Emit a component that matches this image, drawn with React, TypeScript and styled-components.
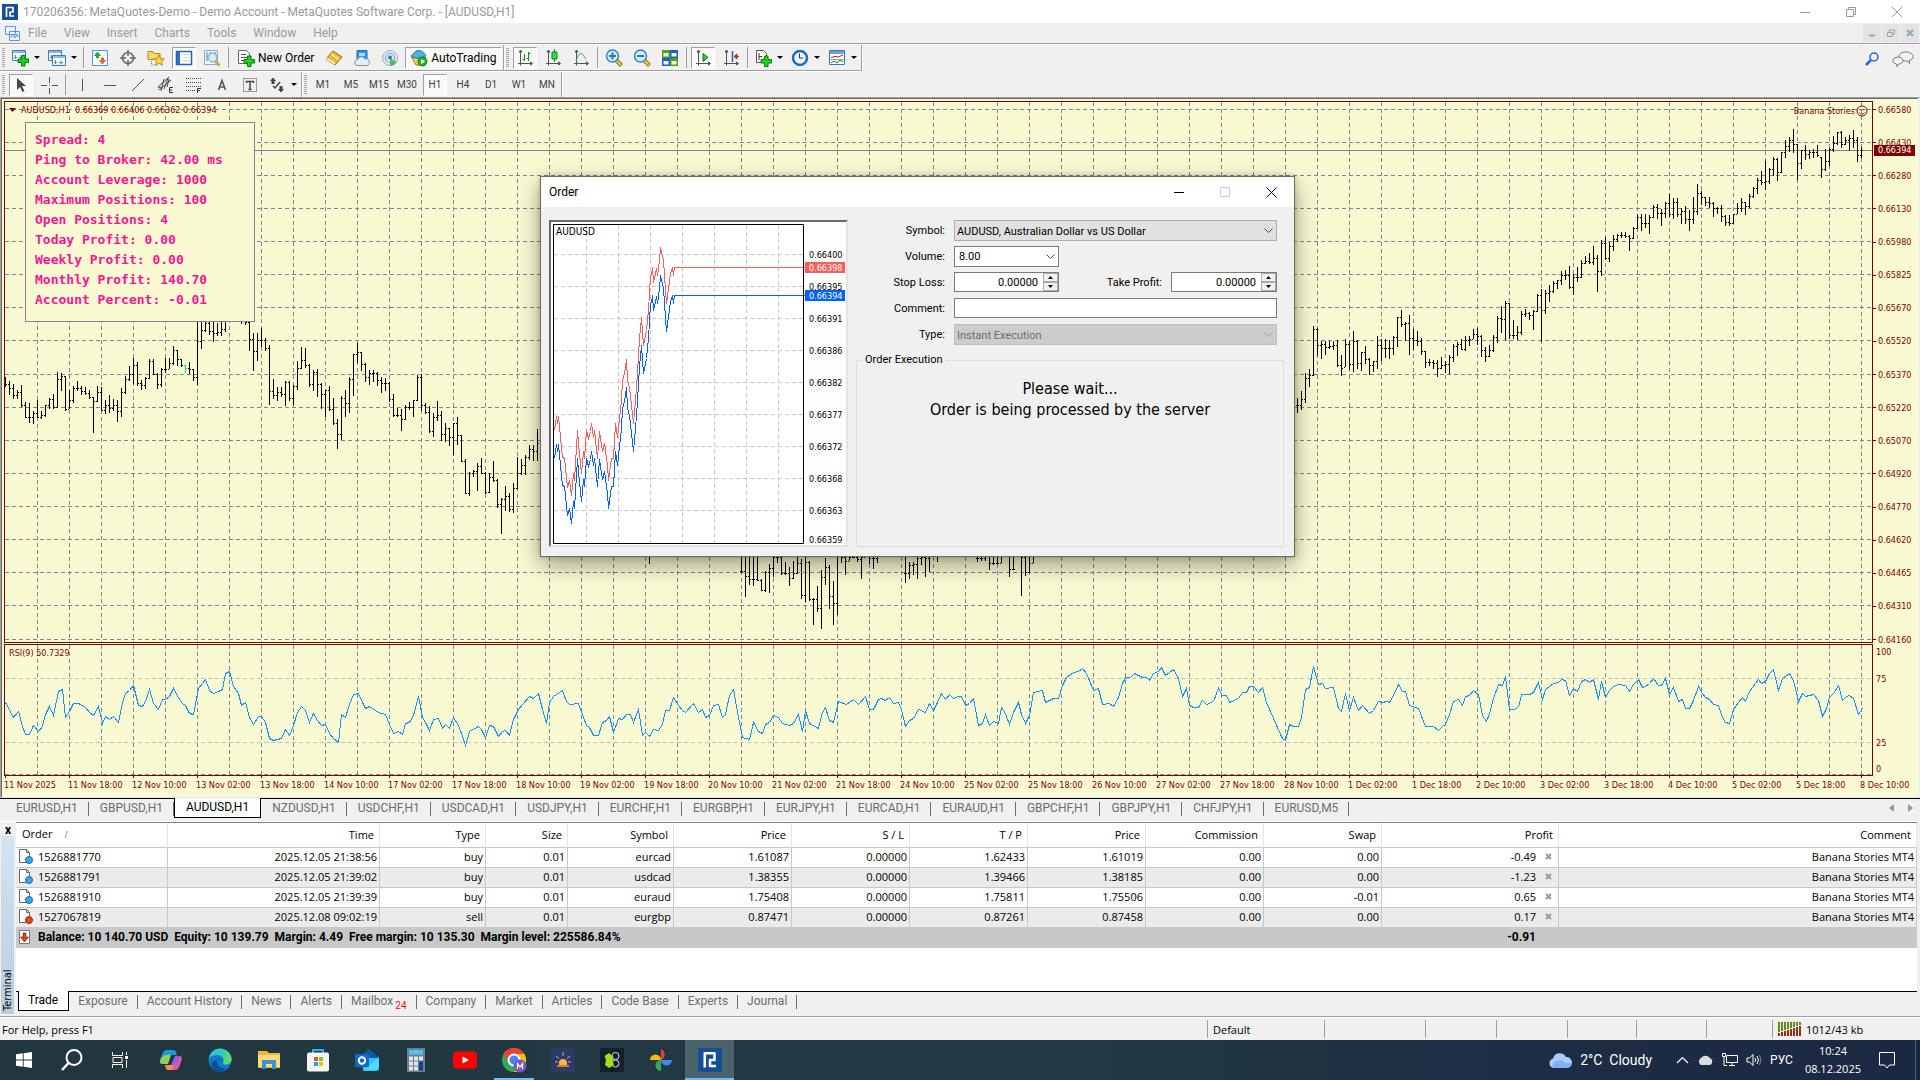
import React from "react";
import styled, { createGlobalStyle, css } from "styled-components";

const ui = `Roboto, "Open Sans", "Liberation Sans", sans-serif`;
const grid = `"Open Sans", "Noto Sans", sans-serif`;
const small = `"DejaVu Sans Condensed", "DejaVu Sans", sans-serif`;
const mono = `"DejaVu Sans Mono", "Liberation Mono", monospace`;
const face = "#f0f0f0";
const paper = "#fafad2";
const maroon = "#800000";
const slate = "#778899";

const GlobalStyle = createGlobalStyle`
  *, *::before, *::after { box-sizing: border-box; }
  body { margin: 0; background: ${face}; font: 12px ${ui}; color: #000; }
  button, input, select { font: inherit; color: inherit; margin: 0; }
  button { background: none; border: 0; padding: 0; }
  svg { display: block; flex: none; }
`;

/* ---------- shell ---------- */
const Page = styled.div`
  position: relative;
  display: flex;
  flex-direction: column;
  min-height: 100vh;
  overflow: hidden;
`;
const TitleBar = styled.header`
  display: flex;
  align-items: center;
  height: 23px;
  padding-left: 2px;
  background: #fff;
  color: #999;
`;
const AppTitle = styled.h1`
  flex: 1;
  margin: 0 0 0 5px;
  font: inherit;
  white-space: nowrap;
`;
const WindowButton = styled.button`
  display: grid;
  place-items: center;
  width: 46px;
  height: 20px;
`;
const MenuBar = styled.nav`
  display: flex;
  align-items: center;
  height: 21px;
  padding: 0 1px 0 5px;
  border-bottom: 1px solid #a0a0a0;
`;
const MenuItems = styled.div`
  display: flex;
  flex: 1;
  gap: 17px;
  margin-left: 8px;
  color: #999;
`;
const MdiButtons = styled.div`
  display: flex;
  gap: 1px;
`;
const MdiButton = styled.button`
  display: grid;
  place-items: center;
  width: 18px;
  height: 18px;
  background: #e3e3e3;
`;

/* ---------- toolbars ---------- */
const ToolRow = styled.div<{ $last?: boolean }>`
  display: flex;
  height: ${(p) => (p.$last ? 25 : 28)}px;
  border-top: ${(p) => (p.$last ? 0 : 1)}px solid #fff;
`;
const ToolGroup = styled.div<{ $under?: boolean }>`
  display: flex;
  align-items: center;
  padding-left: 7px;
  border-right: 1px solid #a0a0a0;
  box-shadow: 1px 0 #fff;
  position: relative;
  ${(p) => p.$under && css`border-bottom: 1px solid #a0a0a0; margin-bottom: 1px; box-shadow: 1px 1px #fff;`}
  &::before {
    content: "";
    position: absolute;
    left: 2px;
    top: 3px;
    bottom: 3px;
    width: 3px;
    background: repeating-linear-gradient(#a8a8a8 0 1px, ${face} 1px 2px);
  }
`;
const ToolButton = styled.button<{ $on?: boolean }>`
  display: flex;
  align-items: center;
  justify-content: center;
  width: 24px;
  height: 22px;
  margin: 0 2px;
  font-size: 10px;
  color: #404040;
  border: 1px solid transparent;
  ${(p) => p.$on && css`background: #f9f9f9; border-color: #a0a0a0 #fff #fff #a0a0a0;`}
`;
const MenuToolButton = styled.button`
  display: flex;
  align-items: center;
  justify-content: space-between;
  width: 33px;
  height: 22px;
  margin: 0 2px;
  padding: 0 2px;
  &::after {
    content: "";
    border: 3px solid transparent;
    border-top-color: #000;
    border-bottom: 0;
  }
`;
const TextToolButton = styled.button<{ $on?: boolean }>`
  display: flex;
  align-items: center;
  gap: 3px;
  height: 22px;
  margin: 0 1px;
  padding: 0 4px;
  border: 1px solid transparent;
  ${(p) => p.$on && css`background: #f9f9f9; border-color: #a0a0a0 #fff #fff #a0a0a0;`}
`;
const Divider = styled.i`
  width: 1px;
  height: 21px;
  margin: 0 2px;
  background: #a0a0a0;
`;
const ToolRight = styled.div`
  display: flex;
  align-items: center;
  gap: 13px;
  margin-left: auto;
  padding-right: 6px;
`;

/* ---------- chart ---------- */
const Workspace = styled.main`
  display: grid;
  grid-template-columns: minmax(0, 1fr) 45px;
  grid-template-rows: 542px 132px 20px;
  row-gap: 1px;
  padding: 2px 0 0 2px;
  margin-right: 2px;
  background: ${paper};
  border: 1px solid #696969;
  border-width: 1px 0 0 1px;
  color: ${maroon};
  font: 9px ${small};
`;
const WorkFrame = styled.div`
  border: 1px solid #a0a0a0;
  border-width: 1px 0 0 1px;
  border-bottom: 1px solid #e3e3e3;
`;
const Pane = styled.section`
  position: relative;
  border: 1px solid ${maroon};
  overflow: hidden;
`;
const PlotSvg = styled.svg`
  width: 100%;
  height: 100%;
`;
const Heading = styled.div`
  position: absolute;
  left: 4px;
  top: 0;
  display: flex;
  align-items: center;
  gap: 5px;
  height: 15px;
  white-space: pre;
`;
const ExpertName = styled.div`
  position: absolute;
  right: 4px;
  top: 2px;
  display: flex;
  align-items: center;
  gap: 1px;
  height: 14px;
`;
const StatsPanel = styled.div`
  position: absolute;
  left: 20px;
  top: 20px;
  width: 230px;
  height: 200px;
  padding: 7px 9px;
  background: ${paper};
  border: 1px solid ${slate};
  color: #ff1493;
  font: bold 13px/20px ${mono};
  white-space: nowrap;
`;
const PriceAxis = styled.div`
  position: relative;
  display: flex;
  flex-direction: column;
  justify-content: space-between;
  padding: 8px 0 3px;
`;
const AxisLabel = styled.span`
  display: flex;
  align-items: center;
  gap: 2px;
  height: 1px;
  line-height: 12px;
  &::before {
    content: "";
    width: 3px;
    height: 1px;
    background: ${maroon};
  }
`;
const PriceBadge = styled.span`
  position: absolute;
  left: 1px;
  top: 44px;
  width: 41px;
  padding-left: 4px;
  line-height: 11px;
  background: ${maroon};
  color: #fff;
`;
const RsiAxis = styled.div`
  display: grid;
  grid-template-rows: 27px 64px 26px 1fr;
  padding: 8px 0 0 3px;
  line-height: 1px;
`;
const TimeAxis = styled.div`
  grid-column: 1 / -1;
  display: flex;
  margin-top: -1px;
  overflow: hidden;
`;
const TimeLabel = styled.span`
  flex: none;
  width: 64px;
  line-height: 14px;
  white-space: nowrap;
  &::before {
    content: "";
    display: block;
    width: 1px;
    height: 2px;
    margin-left: 1px;
    background: ${maroon};
  }
`;

/* ---------- tabs ---------- */
const TabStrip = styled.div<{ $top: number }>`
  display: flex;
  align-items: flex-start;
  height: ${(p) => p.$top}px;
  border-top: 1px solid #000;
  padding-left: 5px;
`;
const Tab = styled.button<{ $active?: boolean; $tight?: boolean }>`
  position: relative;
  height: 19px;
  padding: ${(p) => (p.$tight ? "0 10px 2px 9px" : "0 11px 2px")};
  color: #6d6d6d;
  white-space: nowrap;
  &::after {
    content: "";
    position: absolute;
    right: 0;
    top: 3px;
    bottom: 2px;
    border-right: 1px solid #6d6d6d;
  }
  ${(p) =>
    p.$active &&
    css`
      margin-top: -1px;
      height: 20px;
      background: #fff;
      color: #000;
      border: 1px solid #000;
      border-top: 0;
      &::after { display: none; }
    `}
`;
const TabScroll = styled.div`
  display: flex;
  gap: 14px;
  margin: 5px 7px 0 auto;
`;
const MailCount = styled.sub`
  margin-left: 2px;
  color: #e81123;
  font-size: 10px;
  vertical-align: -4px;
  line-height: 0;
`;

/* ---------- terminal ---------- */
const Terminal = styled.section`
  display: flex;
  height: 194px;
  border-top: 1px solid #fff;
`;
const TerminalGrip = styled.div`
  display: flex;
  flex-direction: column;
  width: 16px;
  padding: 2px 1px 1px;
`;
const GripClose = styled.button`
  height: 12px;
  font: bold 12px/8px ${ui};
`;
const GripBar = styled.div`
  flex: 1;
  display: flex;
  align-items: center;
  justify-content: flex-start;
  writing-mode: vertical-rl;
  transform: rotate(180deg);
  width: 13px;
  padding-top: 3px;
  background: linear-gradient(#b9cde0, #d5e3f1);
  font: 11px ${small};
`;
const TerminalBody = styled.div`
  flex: 1;
  display: flex;
  flex-direction: column;
  min-width: 0;
  margin-right: 3px;
`;
const TerminalScroll = styled.div`
  flex: 1;
  background: #fff;
  border-top: 1px solid #828282;
`;
const Trades = styled.table`
  width: 100%;
  table-layout: fixed;
  border-collapse: separate;
  border-spacing: 0;
  font: 11px/15px ${grid};
  text-align: right;
`;
const HeadCell = styled.th<{ $left?: boolean }>`
  height: 25px;
  padding: 0 5px 2px 6px;
  font-weight: 400;
  text-align: ${(p) => (p.$left ? "left" : "right")};
  border-bottom: 1px solid #c8c8c8;
  border-right: 1px solid #e5e5e5;
`;
const TradeRow = styled.tr<{ $alt?: boolean }>`
  background: ${(p) => (p.$alt ? "#ebebeb" : "#fff")};
`;
const Cell = styled.td`
  height: 20px;
  padding: 0 2px 2px 3px;
  border-bottom: 1px solid #c8c8c8;
  border-right: 1px solid #c8c8c8;
  white-space: nowrap;
`;
const SortMark = styled.span`
  margin-left: 12px;
  color: #777;
  font-size: 9px;
`;
const OrderId = styled.span`
  display: flex;
  align-items: center;
  gap: 5px;
`;
const ProfitCell = styled.span`
  display: flex;
  align-items: center;
  justify-content: flex-end;
  gap: 8px;
  padding-right: 3px;
`;
const CloseTrade = styled.button`
  display: grid;
  place-items: center;
  width: 9px;
  height: 12px;
`;
const BalanceCell = styled.td<{ $profit?: boolean }>`
  height: 20px;
  padding: 0 ${(p) => (p.$profit ? 23 : 3)}px 2px 3px;
  background: #c8c8c8;
  font: bold 12px ${ui};
  white-space: pre;
`;

/* ---------- status and task bars ---------- */
const StatusBar = styled.footer`
  display: flex;
  align-items: center;
  height: 24px;
  margin-top: 1px;
  border-top: 1px solid #a0a0a0;
  box-shadow: inset 0 1px #fff;
  padding: 1px 0 0 2px;
  font: 11px ${grid};
`;
const StatusMain = styled.span`
  flex: 1;
`;
const StatusCell = styled.span<{ $w: number }>`
  display: flex;
  align-items: center;
  gap: 4px;
  width: ${(p) => p.$w}px;
  height: 18px;
  padding-left: 5px;
  border-left: 1px solid #a0a0a0;
`;
const TaskBar = styled.footer`
  display: flex;
  height: 40px;
  color: #fff;
  background: linear-gradient(90deg, #21363f, #223a44 55%, #1d2d43 80%, #1b2842);
`;
const TaskButton = styled.button<{ $state?: "open" | "active"; $first?: boolean }>`
  display: grid;
  place-items: center;
  width: ${(p) => (p.$first ? 48 : 49)}px;
  border-bottom: 2px solid transparent;
  border-top: 2px solid transparent;
  ${(p) => p.$state === "open" && css`background: linear-gradient(#76b9ed, #76b9ed) 50% 100% / 40px 2px no-repeat border-box;`}
  ${(p) => p.$state === "active" && css`background: #4b636c; border-bottom-color: #76b9ed; border-top-color: #4b636c;`}
`;
const TaskApps = styled.div`
  display: flex;
  margin-left: 2px;
  flex: 1;
`;
const Weather = styled.button`
  display: flex;
  align-items: center;
  gap: 8px;
  margin-right: 24px;
  font: 14px ${ui};
  white-space: pre;
`;
const Tray = styled.div`
  display: flex;
  align-items: center;
  gap: 8px;
`;
const Clock = styled.time`
  display: flex;
  flex-direction: column;
  justify-content: center;
  margin: 0 18px 0 12px;
  font: 11px/18px ${grid};
  text-align: center;
`;
const Notify = styled.div`
  display: flex;
  align-items: center;
  padding-right: 20px;
  margin-right: 4px;
  border-right: 1px solid #53606f;
`;

/* ---------- order dialog ---------- */
const Dialog = styled.section`
  position: absolute;
  left: 540px;
  top: 176px;
  width: 755px;
  background: ${face};
  border: 1px solid #6e6e58;
  box-shadow: 0 8px 22px rgba(0, 0, 0, 0.38), 0 0 5px rgba(0, 0, 0, 0.2);
  font: 11px ${ui};
`;
const DialogTitle = styled.header`
  display: flex;
  align-items: center;
  height: 30px;
  background: #fff;
`;
const DialogName = styled.h2`
  flex: 1;
  margin: 0 0 0 8px;
  font: 12px ${ui};
`;
const DialogBody = styled.div`
  display: flex;
  gap: 8px;
  padding: 13px 10px 9px 8px;
`;
const TickFrame = styled.div`
  width: 299px;
  height: 327px;
  background: #fff;
  border: 2px solid;
  border-color: #696969 #e3e3e3 #e3e3e3 #696969;
`;
const Form = styled.form`
  flex: 1;
  display: grid;
  grid-template-columns: 98px 105px 112px 106px;
  grid-template-rows: repeat(5, 21px) 1fr;
  row-gap: 5px;
`;
const Label = styled.label`
  padding-right: 9px;
  line-height: 21px;
  text-align: right;
`;
const fieldBox = css`
  width: 100%;
  height: 21px;
  border: 1px solid #7a7a7a;
  border-radius: 0;
  background: #fff;
  appearance: none;
  outline: 0;
`;
const SelectWrap = styled.div<{ $wide?: boolean }>`
  position: relative;
  grid-column: ${(p) => (p.$wide ? "2 / 5" : "2")};
  & > svg { position: absolute; right: 4px; top: 8px; pointer-events: none; }
`;
const Select = styled.select<{ $look?: "grey" | "off" }>`
  ${fieldBox}
  padding: 0 4px;
  ${(p) => p.$look === "grey" && css`background: #e1e1e1; border-color: #adadad; padding: 1px 2px 0;`}
  ${(p) => p.$look === "off" && css`background: #ccc; border-color: #bfbfbf; color: #6d6d6d; opacity: 1; padding: 1px 2px 0;`}
`;
const Spin = styled.div`
  display: flex;
  height: 20px;
  border: 1px solid #7a7a7a;
  background: #fff;
`;
const SpinInput = styled.input`
  flex: 1;
  min-width: 0;
  border: 0;
  padding: 0 5px;
  background: transparent;
  text-align: right;
  outline: 0;
`;
const SpinButtons = styled.div`
  display: flex;
  flex-direction: column;
  width: 15px;
  & > button {
    flex: 1;
    display: grid;
    place-items: center;
    background: #f0f0f0;
    border: 1px solid #acacac;
  }
`;
const CommentInput = styled.input`
  ${fieldBox}
  height: 20px;
  grid-column: 2 / 5;
`;
const Execution = styled.fieldset`
  grid-column: 1 / -1;
  margin: 3px -7px 0 0;
  padding: 11px 0 0;
  border: 1px solid #dcdcdc;
  min-width: 0;
`;
const Legend = styled.legend`
  margin-left: 5px;
  padding: 0 3px;
  line-height: 14px;
`;
const Wait = styled.p`
  margin: 0;
  text-align: center;
  font: 16px/21px ${small};
`;

/* ---------- chart data ---------- */
type Run = { first: number; shift: number; bars: string };
const runs: Run[] = [
  {
    first: 0, shift: 198,
    bars: `232 262 252,243 285 265,252 298 286,270 298 276,255 320 316,305 353 352,309 368 352,333 371 338,300 354 352,333 357 345,316 350 316,294 327 298,282 326 322,217 324 237,220 272 229,229 334 328,270 328 301,258 308 264,243 272 265,259 284 272,262 284 279,270 297 292,291 399 303,258 305 276,262 334 330,300 342 316,285 340 325,297 332 316,300 365 334,264 350 276,228 281 237,198 242 222,175 252 196,186 258 250,240 269 256,231 266 234,178 238 184,178 226 222,219 266 252,204 260 208,174 219 206,174 208 188,138 194 151,151 198 178,176 201 196,195 218 205,186 222 208,207 244 232,40 254 124,50 147 90,60 96 70,60 106 92,60 125 98,70 108 95,66 108 88,20 95 50,0 50 20,0 50 30,0 60 40,20 72 60,30 74 66,60 152 118,98 212 154,100 182 121,84 142 121,115 154 145,136 315 272,238 297 284,262 302 277,262 290 281,243 318 246,243 302 295,255 314 259,184 269 205,141 206 181,144 204 196,193 260 253,210 273 216,208 290 253,250 326 282,270 350 270,259 333 328,294 375 370,357 446 403,288 420 293,270 350 310,232 339 238,162 288 162,129 188 156,157 214 193,190 246 232,210 256 219,210 246 220,216 258 240,232 278 250,234 273 249,246 305 296,282 350 346,324 350 345,327 392 357,315 360 320,305 330 320,300 350 300,226 304 230,222 332 315,309 343 337,318 398 394,339 411 350,303 362 345,333 423 402,370 425 385,384 438 411,370 465 370,351 434 405,405 487 484,477 582 578,516 587 520,510 531 514,489 572 498,475 521 518,516 581 577,520 580 530,483 545 541,538 623 612,594 701 597,558 632 588,578 636 628,549 638 565,471 566 520,477 526 495,465 525 470,435 480 448,436 482 454,387 482 428`,
  },
  { first: 161, shift: 438, bars: `20 72 30` },
  {
    first: 184, shift: 438,
    bars: `20 98 94,40 170 108,40 135 117,40 137 117,40 124 121,117 154 149,92 156 95,72 160 85,20 111 50,40 70 52,40 105 98,66 105 98,80 138 115,64 118 100,40 102 70,57 176 166,20 186 65,62 182 177,174 256 177,138 216 203,90 266 110,54 135 80,76 206 168,123 255 189,20 224 30,20 70 52,40 105 62,30 63 50,30 55 50,30 65 57,30 116 50,30 50 40,30 72 55,30 88 55,30 70 40`,
  },
  { first: 225, shift: 438, bars: `20 128 98,66 117 76,66 105 73,40 116 55,30 75 52,30 110 55,30 96 40,10 40 30,10 66 30` },
  { first: 243, shift: 438, bars: `10 65 55,10 62 55,10 64 40,20 90 70,30 76 68,40 72 68,20 70 40,0 30 20,20 110 86,30 90 86,0 40 30,0 168 50,30 108 95,50 100 68,10 68 20` },
  {
    first: 321, shift: -22,
    bars: `960 990 970,950 1000 974,955 998 974,934 990 958,880 968 895,868 921 886,738 889 747,744 828 796,783 837 792,784 825 802,784 806 797,784 810 796,780 860 856,825 889 865,778 861 793,784 870 852,753 876 784,780 866 849,816 873 817,798 852 838,834 885 856,843 876 844,768 866 795,778 843 804,777 834 803,780 837 803,768 825 772,711 801 712,690 740 732,726 782 730,705 825 775,747 810 781,753 797 782,774 825 812,812 863 847,838 858 847,840 866 850,840 890 864,831 866 855,844 880 853,825 882 831,792 846 798,785 827 793,778 810 808,768 812 780,768 798 777,747 778 763,744 796 768,765 831 811,800 846 828,795 832 810,765 816 771,708 789 714,678 759 718,663 780 670,669 776 766,720 776 765,738 780 756,693 764 702,686 712 700,696 720 706,690 749 692,642 696 646,627 786 690,630 702 640,614 666 632,603 640 609,600 627 600,574 614 585,570 600 585,558 628 620,583 645 590,562 606 592,540 594 550,528 553 543,519 552 545,498 556 533,525 636 573,480 588 488,471 540 533,486 546 497,465 514 478,462 486 466,457 474 466,457 473 468,466 513 474,441 478 444,402 447 411,402 453 429,402 444 429,405 462 411,375 414 382,372 417 400,386 438 398,366 414 368,342 412 402,353 417 367,354 412 402,385 432 392,378 432 418,390 453 418,351 432 394,312 406 340,334 376 352,350 378 366,351 384 370,366 411 384,380 402 385,375 426 408,405 438 427,405 438 430,402 432 402,368 402 384,354 396 367,366 405 378,342 384 348,321 354 323,294 342 300,273 314 307,243 330 303,264 312 268,231 288 238,234 303 276,216 278 216,180 234 198,172 216 181,147 218 192,192 300 248,210 266 210,195 240 222,211 237 217,207 235 217,195 231 225,231 294 268,207 273 244,205 258 208,169 216 190,156 195 157,154 204 192,171 196 180,165 213 174,150 204 180,172 246 226,202 234 210`,
  },
];
const BUY_MARK = 45;

function barPath(run: Run, only?: number) {
  let prev: number | null = null;
  return run.bars
    .split(",")
    .map((b, i) => {
      const [hi, lo, close] = b.trim().split(" ").map((v) => Math.round(Number(v) / 3 + run.shift));
      const open = prev === null ? close : Math.min(Math.max(prev, hi), lo);
      prev = close;
      const n = run.first + i;
      if (only === undefined ? n === BUY_MARK : n !== only) return "";
      const x = n * 4;
      return `M${x + 0.5} ${hi}V${lo}M${x - 1} ${open + 0.5}H${x}M${x + 1} ${close + 0.5}H${x + 2}`;
    })
    .join("");
}

type Curve = { dx: number; dy: number; pts: string };
const rsi: Curve[] = [
  { dx: -5, dy: -345, pts: "13,1206 33,1250 43,1234 53,1278 62,1301 72,1301 82,1275 92,1292 102,1278 111,1242 121,1218 131,1244 141,1173 151,1168 160,1252 170,1232 180,1210 190,1210 209,1220 219,1237 229,1246 239,1218 249,1268 258,1248 268,1258 278,1247 288,1265 298,1205 307,1180 317,1170 327,1156 337,1214 347,1217 356,1203 366,1168 376,1208 386,1228 396,1198 405,1198 415,1187 425,1165 435,1190 445,1210 454,1215 464,1238 474,1243 484,1165 494,1148 503,1137 513,1170 523,1178 533,1174 543,1168 552,1120 562,1114 572,1158 582,1180 591,1216 601,1205 611,1250 621,1273 631,1249 640,1249 650,1265 660,1315 670,1319 689,1313 699,1287 709,1306 719,1276 728,1235 738,1218 748,1230 758,1267 768,1240 777,1260 787,1276 797,1272 807,1300 817,1314 827,1325 836,1243 846,1252 856,1213 866,1182 876,1180 886,1205 895,1225 905,1219 925,1235 944,1243 954,1272 964,1298 974,1294 984,1303 993,1268 1003,1265 1013,1244 1023,1188 1033,1252 1042,1265 1052,1290 1062,1258 1072,1254 1082,1285 1091,1271 1101,1285 1111,1252 1121,1275 1131,1308 1140,1334 1150,1293 1170,1279 1179,1286 1189,1310 1199,1276 1209,1279 1219,1308 1229,1294 1238,1291 1248,1305 1258,1257 1268,1228 1278,1211 1297,1189 1307,1194 1317,1180 1327,1228 1337,1268 1346,1205 1356,1189 1376,1171 1386,1202 1395,1213 1415,1210 1425,1243 1435,1275 1444,1280 1454,1306 1464,1306 1474,1265 1484,1260 1493,1247 1503,1295 1513,1255 1523,1258 1533,1241 1543,1241 1552,1267 1562,1228" },
  { dx: 635, dy: -105, pts: "4,586 13,575 23,589 33,568 43,571 53,552 62,510 72,510 82,470 92,494 102,510 111,517 131,488 141,517 151,506 160,530 170,526 180,495 190,491 200,532 209,523 219,466 229,448 239,530 249,590 268,596 278,547 288,573 298,580 307,553 317,547 327,526 337,530 347,549 366,555 376,549 386,523 396,572 405,510 415,549 435,565 445,515 454,502 464,540 474,547 484,484 504,493 523,478 533,493 552,469 562,506 572,506 582,478 591,475 601,479 611,470 621,490 631,485 640,508 650,559 660,540 670,534 680,506 699,516 709,490 719,510 728,487 738,458 748,477 758,461 768,475 778,467 787,467 797,495 807,490 817,473 827,555 837,550 846,523 856,556 866,542 876,548 885,502 895,520 905,552 915,516 925,487 934,522 944,550 954,525 964,457 984,451 993,487 1013,475 1023,475 1033,436 1043,412 1062,395 1072,394 1082,385 1092,400 1111,450 1121,445 1131,493 1150,488 1160,499 1170,470 1180,428 1189,410 1200,412 1210,400 1229,411 1239,412 1248,420 1258,400 1268,392 1277,380 1287,405 1307,388 1317,415 1327,469 1337,445 1346,495 1356,502 1366,502 1376,481 1386,492 1405,484 1415,445 1425,466 1435,466 1444,487 1464,475 1474,455 1484,457 1493,438 1503,438 1513,457 1523,442 1533,487" },
  { dx: 1275, dy: -165, pts: "0,763 4,774 13,780 23,731 33,738 43,738 52,710 62,628 72,622 82,558 92,612 102,609 111,624 131,622 141,685 150,694 160,640 170,690 180,652 190,690 200,676 219,700 229,690 239,662 249,667 259,663 268,667 278,645 288,613 298,634 307,634 317,675 337,685 356,738 376,737 386,750 396,738 405,732 415,702 425,664 435,658 445,676 454,648 464,645 474,630 484,642 494,706 504,724 513,698 523,655 533,613 543,614 552,589 562,688 572,688 582,681 591,643 611,643 621,637 631,607 641,657 650,628 670,609 680,607 689,597 699,600 709,646 719,625 728,632 738,602 748,598 758,605 768,598 778,658 787,603 797,651 807,630 817,618 827,613 846,614 856,634 866,612 876,596 886,620 895,617 905,610 915,594 925,616 934,616 944,595 954,643 964,622 974,664 984,658 993,685 1003,685 1013,660 1023,619 1033,640 1042,652 1052,658 1062,673 1072,676 1082,710 1091,727 1101,730 1111,688 1121,665 1131,652 1140,664 1150,632 1170,598 1179,610 1189,603 1199,580 1209,568 1219,631 1229,595 1248,580 1258,600 1268,664 1278,640 1287,649 1307,643 1317,660 1327,709 1337,685 1346,652 1356,640 1366,615 1376,661 1386,649 1395,646 1405,654 1415,703 1425,685" },
];
const ticks: Curve = {
  dx: -31, dy: -62,
  pts: "67,810 70,768 72,790 74,768 78,830 82,892 86,893 92,980 96,960 99,1005 104,940 106,960 111,810 114,850 119,940 123,872 125,895 130,810 134,835 137,812 140,790 143,832 146,810 150,895 155,812 160,872 164,850 170,915 173,960 178,893 182,895 187,790 190,832 194,775 198,720 200,660 203,640 207,598 210,660 214,680 218,735 221,790 225,720 230,640 234,535 238,472 242,555 247,510 251,450 255,345 257,343 259,322 261,365 264,340 266,325 269,345 272,300 275,260 280,300 283,345 287,430 291,385 294,340 298,322 300,345 302,322 556,322",
};
const curve = (c: Curve, kx: number, extra = 0) =>
  c.pts
    .split(" ")
    .map((p) => {
      const [x, y] = p.split(",").map(Number);
      return `${Math.round(x / kx + c.dx) + 0.5},${Math.round(y / 3 + c.dy) + extra + 0.5}`;
    })
    .join(" ");

const prices = ["0.66580", "0.66430", "0.66280", "0.66130", "0.65980", "0.65825", "0.65670", "0.65520", "0.65370", "0.65220", "0.65070", "0.64920", "0.64770", "0.64620", "0.64465", "0.64310", "0.64160"];
const times = ["11 Nov 2025", "11 Nov 18:00", "12 Nov 10:00", "13 Nov 02:00", "13 Nov 18:00", "14 Nov 10:00", "17 Nov 02:00", "17 Nov 18:00", "18 Nov 10:00", "19 Nov 02:00", "19 Nov 18:00", "20 Nov 10:00", "21 Nov 02:00", "21 Nov 18:00", "24 Nov 10:00", "25 Nov 02:00", "25 Nov 18:00", "26 Nov 10:00", "27 Nov 02:00", "27 Nov 18:00", "28 Nov 10:00", "1 Dec 02:00", "1 Dec 18:00", "2 Dec 10:00", "3 Dec 02:00", "3 Dec 18:00", "4 Dec 10:00", "5 Dec 02:00", "5 Dec 18:00", "8 Dec 10:00"];
const stats = ["Spread: 4", "Ping to Broker: 42.00 ms", "Account Leverage: 1000", "Maximum Positions: 100", "Open Positions: 4", "Today Profit: 0.00", "Weekly Profit: 0.00", "Monthly Profit: 140.70", "Account Percent: -0.01"];
const symbols = ["EURUSD,H1", "GBPUSD,H1", "AUDUSD,H1", "NZDUSD,H1", "USDCHF,H1", "USDCAD,H1", "USDJPY,H1", "EURCHF,H1", "EURGBP,H1", "EURJPY,H1", "EURCAD,H1", "EURAUD,H1", "GBPCHF,H1", "GBPJPY,H1", "CHFJPY,H1", "EURUSD,M5"];
const sections = ["Trade", "Exposure", "Account History", "News", "Alerts", "Mailbox", "Company", "Market", "Articles", "Code Base", "Experts", "Journal"];
const columns: [string, number?][] = [["Order", 152], ["Time", 212], ["Type", 106], ["Size", 82], ["Symbol", 106], ["Price", 118], ["S / L", 118], ["T / P", 118], ["Price", 118], ["Commission", 118], ["Swap", 118], ["Profit", 177], ["Comment"]];
const trades = [
  ["1526881770", "2025.12.05 21:38:56", "buy", "0.01", "eurcad", "1.61087", "0.00000", "1.62433", "1.61019", "0.00", "0.00", "-0.49"],
  ["1526881791", "2025.12.05 21:39:02", "buy", "0.01", "usdcad", "1.38355", "0.00000", "1.39466", "1.38185", "0.00", "0.00", "-1.23"],
  ["1526881910", "2025.12.05 21:39:39", "buy", "0.01", "euraud", "1.75408", "0.00000", "1.75811", "1.75506", "0.00", "-0.01", "0.65"],
  ["1527067819", "2025.12.08 09:02:19", "sell", "0.01", "eurgbp", "0.87471", "0.00000", "0.87261", "0.87458", "0.00", "0.00", "0.17"],
];

/* ---------- icons ---------- */
const Ico = ({ w = 18, h = w, children }: { w?: number; h?: number; children: React.ReactNode }) => (
  <svg width={w} height={h} viewBox={`0 0 ${w} ${h}`} fill="none" aria-hidden="true">{children}</svg>
);
const Plus = ({ x, y }: { x: number; y: number }) => (
  <path transform={`translate(${x} ${y})`} d="M4 .5h3.500v3.500h3.500v3.500h-3.500v3.500h-3.500v-3.500h-3.500v-3.500h3.500z" fill="#1fd01f" stroke="#0a7d12" />
);
const Brand = ({ s = 16 }: { s?: number }) => (
  <svg width={s} height={s} viewBox="0 0 16 16" aria-hidden="true">
    <path d="M0 0h16v16H0z" fill="#164f93" />
    <path d="M4.500 13V3.500h6.500v4.500H8v4h4" fill="none" stroke="#fff" strokeWidth="1.700" strokeLinejoin="round" />
  </svg>
);
const axes = <path d="M4.500 1.500v15M2 14.500h13M4.500 1l-1.500 2h3zM16.500 14.500l-2-1.500v3z" stroke="#555" fill="#555" />;
const winIcon = (x: number, y: number) => (
  <g transform={`translate(${x} ${y})`}>
    <path d="M.5.5h13v10h-13z" fill="#f4faff" stroke="#3d7cba" />
    <path d="M1 1h12v2H1z" fill="#8dbbe8" />
    <path d="M2 7.500h3M3.500 5v4M7 7.500h4M9 5.500v4" stroke="#5f8bb5" />
  </g>
);
const Magnifier = ({ minus }: { minus?: boolean }) => (
  <Ico>
    <path d="M11 11l5.500 5.500" stroke="#9a7406" strokeWidth="4" />
    <path d="M11 11l5 5" stroke="#f3cf3c" strokeWidth="2" />
    <circle cx="7.500" cy="7" r="6" fill="#cfeafd" stroke="#3b83c7" strokeWidth="1.500" />
    <path d={minus ? "M4 7h7" : "M4 7h7M7.500 3.500v7"} stroke="#2f77b8" strokeWidth="2" />
  </Ico>
);
const Chevron = ({ c = "#444" }: { c?: string }) => (
  <Ico w={9} h={5}><path d="M.5.5l4 4 4-4" stroke={c} /></Ico>
);
const Sheet = ({ sell }: { sell?: boolean }) => (
  <Ico w={14} h={15}>
    <path d="M.5.5h7l3 3v10h-10z" fill="#fff" stroke="#666" />
    <path d="M7.500.5v3h3" stroke="#666" />
    <circle cx="10" cy="11" r="3.500" fill={sell ? "#e8481f" : "#3ba8ee"} stroke={sell ? "#9b2a0c" : "#1668a8"} />
  </Ico>
);
const Spinner = () => (
  <SpinButtons>
    <button type="button" aria-label="Increase"><Ico w={5} h={3}><path d="M0 3l2.500-3L5 3z" fill="#000" /></Ico></button>
    <button type="button" aria-label="Decrease"><Ico w={5} h={3}><path d="M0 0l2.500 3L5 0z" fill="#000" /></Ico></button>
  </SpinButtons>
);

function TopToolbar() {
  return (
    <ToolRow>
      <ToolGroup $under>
        <MenuToolButton aria-label="New chart"><Ico>{winIcon(1, 1)}<Plus x={6.5} y={6} /></Ico></MenuToolButton>
        <MenuToolButton aria-label="Profiles"><Ico>{winIcon(0, 1)}{winIcon(4, 6)}</Ico></MenuToolButton>
        <Divider />
        <ToolButton aria-label="Market Watch">
          <Ico><path d="M1.500 1.500h15v15h-15z" fill="#f8fcff" stroke="#4c9be0" /><path d="M6.500 3l3 3.500h-2V9h-2V6.500h-2z" fill="#1fae2c" stroke="#0e7a1a" strokeWidth=".6" /><path d="M11.500 15l3-3.500h-2V9h-2v2.500h-2z" fill="#f06a2a" stroke="#b53a10" strokeWidth=".6" /></Ico>
        </ToolButton>
        <ToolButton aria-label="Data Window"><Ico><circle cx="9" cy="9" r="5.500" stroke="#666" strokeWidth="1.500" /><path d="M9 1v6M9 11v6M1 9h6M11 9h6" stroke="#666" strokeWidth="1.500" /></Ico></ToolButton>
        <ToolButton aria-label="Favorites">
          <Ico><path d="M1 2.500h5l1 2h6v6H1z" fill="#f8d667" stroke="#b58a1e" /><path d="M4.500 12v4h4" stroke="#777" strokeDasharray="1 1" /><path d="M12 6l1.600 3.600 3.900.3-3 2.500 1 4-3.500-2.100-3.500 2.100 1-4-3-2.500 3.900-.3z" fill="#ffd83d" stroke="#a87809" strokeWidth=".8" /></Ico>
        </ToolButton>
        <ToolButton $on aria-label="Navigator">
          <Ico><path d="M1.500 2.500h15v13h-15z" fill="#fff" stroke="#2a62ae" strokeWidth="1.500" /><path d="M2 3h3v12H2z" fill="#2f6fc0" /><path d="M7 5.500h8M7 8.500h8M7 11.500h8" stroke="#c9dcf0" /></Ico>
        </ToolButton>
        <ToolButton aria-label="Strategy Tester">
          <Ico><path d="M1.500 1.500h13v14h-13z" fill="#eef5fb" stroke="#8aa9c4" /><path d="M4 3v9M7 3v6M12 3v5" stroke="#4c7fb0" /><path d="M12 12l4.500 4.500" stroke="#d7a62a" strokeWidth="3" /><circle cx="9.500" cy="8.500" r="4.500" fill="#d3ecfbcc" stroke="#6c9cc4" /></Ico>
        </ToolButton>
        <Divider />
        <TextToolButton>
          <Ico><path d="M1.500 1.500h8l3 3v10h-11z" fill="#fff" stroke="#666" /><path d="M4 5.500h5M4 8.500h6M4 11.500h4" stroke="#555" /><Plus x={6.5} y={6.5} /></Ico>
          New Order
        </TextToolButton>
        <ToolButton aria-label="MetaEditor"><Ico><path d="M1 10l7-8 9 6-7 8z" fill="#e9b73a" stroke="#94690d" /><path d="M1 10l9 6v-2.500L2 8.500z" fill="#fff3c4" /><path d="M6 5l8 5.500" stroke="#ffe58b" strokeWidth="2" /></Ico></ToolButton>
        <ToolButton aria-label="Virtual Hosting">
          <Ico><path d="M4 1.500h10v9H4z" fill="#2f97ea" stroke="#1f6fb8" /><path d="M6 4h6v3H6z" fill="#a6dbff" /><path d="M4 16.500a3 3 0 0 1 .5-5.900 4 4 0 0 1 7.500-.6 3.300 3.300 0 0 1 2 6.500z" fill="#e5edf5" stroke="#7b93ad" /></Ico>
        </ToolButton>
        <ToolButton aria-label="Signals">
          <Ico><circle cx="9" cy="9" r="7.500" fill="#dfe8ee" stroke="#9fb3c2" /><circle cx="9" cy="9" r="4.500" stroke="#7fb0cb" strokeWidth="1.200" /><path d="M9 9v8a8 8 0 0 0 6.500-4z" fill="#57b95c" /><circle cx="9" cy="8.500" r="2" fill="#2b7fc1" /></Ico>
        </ToolButton>
        <TextToolButton $on>
          <Ico><path d="M1.500 8h14l-1.500 6a8 8 0 0 1-8 2z" fill="#f5cf4b" stroke="#a37a10" /><path d="M1 7c2-1 3-5 7-5.500s6 2.500 8 5C12 10 4 10 1 7z" fill="#4fb3df" stroke="#1e79a8" /><circle cx="12.500" cy="12.500" r="4.500" fill="#25b42a" stroke="#0d7a14" /><path d="M11 10l4 2.500-4 2.500z" fill="#fff" /></Ico>
          AutoTrading
        </TextToolButton>
      </ToolGroup>
      <ToolGroup $under>
        <ToolButton $on aria-label="Bar Chart"><Ico>{axes}<path d="M8.500 5v7M6.500 10.500h2M12.500 3v9M12.500 4.500h2M10.500 9.500h2" stroke="#0c8a1b" /></Ico></ToolButton>
        <ToolButton aria-label="Candlesticks"><Ico>{axes}<path d="M10.500 0v13" stroke="#0c8a1b" /><path d="M8 3h5v7H8z" fill="#33dd44" stroke="#0c8a1b" /></Ico></ToolButton>
        <ToolButton aria-label="Line Chart"><Ico>{axes}<path d="M4 12c3-9 5-10 10-2" stroke="#3c9c46" /></Ico></ToolButton>
        <Divider />
        <ToolButton aria-label="Zoom In"><Magnifier /></ToolButton>
        <ToolButton aria-label="Zoom Out"><Magnifier minus /></ToolButton>
        <ToolButton aria-label="Tile Windows">
          <Ico><path d="M1 1h8v8H1zM9 9h8v8H9z" fill="#4aa30f" /><path d="M9 1h8v8H9zM1 9h8v8H1z" fill="#2458cf" /><path d="M2.500 4h5v3.500h-5zM10.500 4h5v3.500h-5zM2.500 12h5v3.500h-5zM10.500 12h5v3.500h-5z" fill="#eef6ff" /></Ico>
        </ToolButton>
        <Divider />
        <ToolButton $on aria-label="Auto Scroll"><Ico>{axes}<path d="M9 4.500l5 4-5 4z" fill="#35c53f" stroke="#0c7a18" /></Ico></ToolButton>
        <ToolButton aria-label="Chart Shift"><Ico>{axes}<path d="M10.500 2v11" stroke="#2367a5" strokeWidth="1.500" /><path d="M17 7.500h-4M15 5l-3 2.500 3 2.500z" stroke="#b5330c" fill="#b5330c" /></Ico></ToolButton>
        <Divider />
        <MenuToolButton aria-label="Indicators"><Ico><path d="M2.500 1.500h7l3 3v9h-10z" fill="#fff" stroke="#555" /><path d="M5 4v7M5 7.500h3" stroke="#333" /><Plus x={6.5} y={6.5} /></Ico></MenuToolButton>
        <MenuToolButton aria-label="Periods"><Ico><circle cx="9" cy="9" r="7" fill="#eef5fc" stroke="#1d6cc4" strokeWidth="2.500" /><path d="M8.500 4.500V9H12" stroke="#333" /></Ico></MenuToolButton>
        <MenuToolButton aria-label="Templates"><Ico><path d="M1.500 1.500h15v14h-15z" fill="#fff" stroke="#3876bd" /><path d="M2 2h14v3H2z" fill="#6ba3dd" /><path d="M2 10.500h14" stroke="#8ab" /><path d="M3 8.500l4-1 3 .5 5-2" stroke="#a02a10" /><path d="M3 14l3-2 3 2 3-3 3 2" stroke="#128a22" /></Ico></MenuToolButton>
      </ToolGroup>
      <ToolRight>
        <Ico w={14}><circle cx="9" cy="5" r="4" stroke="#2f62d8" strokeWidth="1.500" fill="#eaf2ff" /><path d="M6 8l-5 5" stroke="#2f62d8" strokeWidth="2.500" /></Ico>
        <Ico w={22} h={16}><path d="M14 1c4 0 7 2 7 4.500 0 2-1.500 3.500-4 4.200l1 2.800-3-2.500c-5 0-8-1.800-8-4.500S10 1 14 1z" fill="#f3f3f3" stroke="#777" /><path d="M6 6c3 0 5 1.700 5 3.700S9 13 6.500 13L5 15.500 4.500 13C2.500 12.500 1 11.500 1 9.700 1 7.700 3 6 6 6z" fill="#f9f9f9" stroke="#777" /></Ico>
      </ToolRight>
    </ToolRow>
  );
}

const periods = ["M1", "M5", "M15", "M30", "H1", "H4", "D1", "W1", "MN"];
function DrawToolbar() {
  const s = { stroke: "#555", strokeWidth: 1 };
  return (
    <ToolRow $last>
      <ToolGroup>
        <ToolButton $on aria-label="Cursor"><Ico><path d="M5 2v12l3-3 2.500 5 2-1L10 10h4z" fill="#444" /></Ico></ToolButton>
        <ToolButton aria-label="Crosshair"><Ico><path d="M9.500 1v6M9.500 12v6M1 9.500h6M12 9.500h6M9 9.500h1" {...s} /></Ico></ToolButton>
        <Divider />
        <ToolButton aria-label="Vertical Line"><Ico><path d="M9.500 3v12" {...s} /></Ico></ToolButton>
        <ToolButton aria-label="Horizontal Line"><Ico><path d="M3 9.500h12" {...s} /></Ico></ToolButton>
        <ToolButton aria-label="Trendline"><Ico><path d="M3 15L15 3" {...s} /></Ico></ToolButton>
        <ToolButton aria-label="Channel"><Ico><path d="M1 11L12 1M2 14L14 4M4 15L7 3M7 13l4-11M10 11l2-8M1 12l3-1" stroke="#444" /><path d="M16 11.500h-3.500v5H16M12.500 14H15" stroke="#333" /></Ico></ToolButton>
        <ToolButton aria-label="Fibonacci"><Ico><path d="M1 2.500h15M1 6.500h15M1 10.500h15M1 14.500h9" stroke="#444" strokeDasharray="1 1" /><path d="M16 12.500h-3.500V17M12.500 14.500H15" stroke="#333" /></Ico></ToolButton>
        <ToolButton aria-label="Text"><Ico><path d="M5.500 14l3.500-9.500 3.500 9.500M6.500 11h5" stroke="#555" strokeWidth="1.600" /></Ico></ToolButton>
        <ToolButton aria-label="Text Label"><Ico><path d="M2.500 2.500h13v13h-13z" stroke="#444" strokeDasharray="1 1" /><path d="M5.500 7V5.500h7V7M9 6v8M7.500 13.500h3" stroke="#444" strokeWidth="1.500" /></Ico></ToolButton>
        <MenuToolButton aria-label="Arrows"><Ico><path d="M5 1.500L8 5H6.500v3h-3V5H2zM13 16.500L10 13h1.500v-3h3v3H16z" fill="#444" /><path d="M5 10l2 2 5-6" stroke="#444" strokeWidth="1.500" /></Ico></MenuToolButton>
      </ToolGroup>
      <ToolGroup>
        {periods.map((p) => <ToolButton key={p} $on={p === "H1"}>{p}</ToolButton>)}
      </ToolGroup>
    </ToolRow>
  );
}

function GridLines({ rows }: { rows: boolean }) {
  return (
    <g stroke={slate} strokeDasharray="4 3" shapeRendering="crispEdges">
      {Array.from({ length: 58 }, (_, i) => <line key={i} x1={32 * (i + 1) + 0.5} x2={32 * (i + 1) + 0.5} y1="0" y2="100%" />)}
      {rows && prices.map((p, i) => {
        const y = Math.floor(7 + i * 33.125) + 0.5;
        return <line key={p} x1="0" x2="100%" y1={y} y2={y} />;
      })}
    </g>
  );
}

function Chart() {
  return (
    <WorkFrame>
      <Workspace>
        <Pane aria-label="AUDUSD chart">
          <PlotSvg>
            <GridLines rows />
            <line x1="0" x2="100%" y1="48.500" y2="48.500" stroke={slate} shapeRendering="crispEdges" />
            <g shapeRendering="crispEdges" fill="none">
              {runs.map((r) => <path key={r.first} d={barPath(r)} stroke="#000" />)}
              <path d={barPath(runs[0], BUY_MARK)} stroke="#00e676" />
            </g>
          </PlotSvg>
          <Heading>
            <Ico w={7} h={4}><path d="M0 0h7L3.500 4z" fill={maroon} /></Ico>
            <span>{"AUDUSD,H1  0.66369 0.66406 0.66362 0.66394"}</span>
          </Heading>
          <ExpertName>
            Banana Stories
            <Ico w={12}><circle cx="6" cy="6" r="5" stroke={maroon} /><path d="M4 4v1.500M8 4v1.500M3.500 7.500c1 2 4 2 5 0" stroke={maroon} /></Ico>
          </ExpertName>
          <StatsPanel>{stats.map((s) => <div key={s}>{s}</div>)}</StatsPanel>
        </Pane>
        <PriceAxis>
          {prices.map((p) => <AxisLabel key={p}>{p}</AxisLabel>)}
          <PriceBadge>0.66394</PriceBadge>
        </PriceAxis>
        <Pane aria-label="RSI">
          <PlotSvg>
            <GridLines rows={false} />
            <g shapeRendering="crispEdges" strokeDasharray="4 3">
              <line x1="0" x2="100%" y1="33.500" y2="33.500" stroke="#c0c0c0" />
              <line x1="0" x2="100%" y1="97.500" y2="97.500" stroke="#c0c0c0" />
              <line x1="0" x2="100%" y1="129.500" y2="129.500" stroke={slate} />
            </g>
            <polyline points={rsi.map((c) => curve(c, 2.45)).join(" ")} fill="none" stroke="#1e90ff" shapeRendering="crispEdges" />
          </PlotSvg>
          <Heading>RSI(9) 50.7329</Heading>
        </Pane>
        <RsiAxis><span>100</span><span>75</span><span>25</span><span>0</span></RsiAxis>
        <TimeAxis>{times.map((t) => <TimeLabel key={t}>{t}</TimeLabel>)}</TimeAxis>
      </Workspace>
    </WorkFrame>
  );
}

const tickPrices: [string, number][] = [["0.66400", 32], ["0.66395", 64], ["0.66391", 96], ["0.66386", 128], ["0.66382", 160], ["0.66377", 192], ["0.66372", 224], ["0.66368", 256], ["0.66363", 288], ["0.66359", 317]];
function OrderDialog() {
  return (
    <Dialog role="dialog" aria-label="Order">
      <DialogTitle>
        <DialogName>Order</DialogName>
        <WindowButton aria-label="Minimize"><Ico w={10}><path d="M0 5.500h10" stroke="#000" /></Ico></WindowButton>
        <WindowButton aria-label="Maximize"><Ico w={10}><path d="M.5.5h9v9h-9z" stroke="#ccc" /></Ico></WindowButton>
        <WindowButton aria-label="Close"><Ico w={11}><path d="M.5.5l10 10M10.500.5l-10 10" stroke="#000" /></Ico></WindowButton>
      </DialogTitle>
      <DialogBody>
        <TickFrame>
          <svg width="295" height="323" fontFamily="DejaVu Sans Condensed, DejaVu Sans, sans-serif" fontSize="9" fill="none">
            <g stroke="#c8c8c8" strokeDasharray="4 3" shapeRendering="crispEdges">
              {[0, 1, 2, 3, 4, 5, 6].map((i) => <line key={i} x1={35.5 + i * 32} x2={35.5 + i * 32} y1="3" y2="321" />)}
              {tickPrices.slice(0, 9).map(([p, y]) => <line key={p} x1="3" x2="253" y1={y + 0.5} y2={y + 0.5} />)}
            </g>
            <g shapeRendering="crispEdges">
              <polyline points={curve(ticks, 1.96)} stroke="#ff5c5c" />
              <polyline points={curve(ticks, 1.96, 28)} stroke="#0060ff" />
            </g>
            <path d="M2.500 2.500h250v319h-250z" stroke="#000" />
            <text x="5" y="13" fill="#000" fontSize="10">AUDUSD</text>
            {tickPrices.map(([p, y]) => <text key={p} x="258" y={y + 4} fill="#000">{p}</text>)}
            <path d="M254 40h40v11h-40z" fill="#ff5c5c" /><text x="258" y="49" fill="#fff">0.66398</text>
            <path d="M254 68h40v11h-40z" fill="#0060ff" /><text x="258" y="77" fill="#fff">0.66394</text>
          </svg>
        </TickFrame>
        <Form onSubmit={(e) => e.preventDefault()}>
          <Label htmlFor="sym">Symbol:</Label>
          <SelectWrap $wide><Select id="sym" $look="grey"><option>AUDUSD, Australian Dollar vs US Dollar</option></Select><Chevron /></SelectWrap>
          <Label htmlFor="vol">Volume:</Label>
          <SelectWrap><Select id="vol"><option>8.00</option></Select><Chevron /></SelectWrap>
          <span /><span />
          <Label htmlFor="sl">Stop Loss:</Label>
          <Spin><SpinInput id="sl" defaultValue="0.00000" /><Spinner /></Spin>
          <Label htmlFor="tp">Take Profit:</Label>
          <Spin><SpinInput id="tp" defaultValue="0.00000" /><Spinner /></Spin>
          <Label htmlFor="com">Comment:</Label>
          <CommentInput id="com" />
          <Label htmlFor="typ">Type:</Label>
          <SelectWrap $wide><Select id="typ" $look="off" disabled><option>Instant Execution</option></Select><Chevron c="#a0a0a0" /></SelectWrap>
          <Execution>
            <Legend>Order Execution</Legend>
            <Wait>Please wait...</Wait>
            <Wait>Order is being processed by the server</Wait>
          </Execution>
        </Form>
      </DialogBody>
    </Dialog>
  );
}

const InnerStrip = styled(TabStrip)`
  padding-left: 2px;
`;

function TerminalPanel() {
  return (
    <Terminal>
      <TerminalGrip><GripClose aria-label="Close terminal">x</GripClose><GripBar>Terminal</GripBar></TerminalGrip>
      <TerminalBody>
        <TerminalScroll>
          <Trades>
            <colgroup>{columns.map(([, w], i) => <col key={i} width={w} />)}</colgroup>
            <thead>
              <tr>{columns.map(([c], i) => <HeadCell key={i} $left={i === 0}>{c}{i === 0 && <SortMark>/</SortMark>}</HeadCell>)}</tr>
            </thead>
            <tbody>
              {trades.map((t, r) => (
                <TradeRow key={t[0]} $alt={r % 2 === 1}>
                  {t.map((v, i) => (
                    <Cell key={i}>
                      {i === 0 ? <OrderId><Sheet sell={t[2] === "sell"} />{v}</OrderId>
                        : i === 11 ? <ProfitCell>{v}<CloseTrade aria-label="Close order"><Ico w={7}><path d="M1 1l5 5M6 1L1 6" stroke="#999" strokeWidth="2" /></Ico></CloseTrade></ProfitCell>
                        : v}
                    </Cell>
                  ))}
                  <Cell>Banana Stories MT4</Cell>
                </TradeRow>
              ))}
              <tr>
                <BalanceCell colSpan={11}>
                  <OrderId>
                    <Ico w={14} h={15}><path d="M.5.5h10v13H.5z" fill="#fff" stroke="#777" /><path d="M4 3h3v4h2.500l-4 5-4-5H4z" fill="#d9431c" stroke="#8b2208" strokeWidth=".7" /></Ico>
                    {"Balance: 10 140.70 USD  Equity: 10 139.79  Margin: 4.49  Free margin: 10 135.30  Margin level: 225586.84%"}
                  </OrderId>
                </BalanceCell>
                <BalanceCell $profit>-0.91</BalanceCell>
                <BalanceCell />
              </tr>
            </tbody>
          </Trades>
        </TerminalScroll>
        <InnerStrip $top={24}>
          {sections.map((s) => <Tab key={s} $tight $active={s === "Trade"}>{s}{s === "Mailbox" && <MailCount>24</MailCount>}</Tab>)}
        </InnerStrip>
      </TerminalBody>
    </Terminal>
  );
}

const taskIcons: [string, React.ReactNode, ("open" | "active")?][] = [
  ["Copilot", <Ico w={24}><path d="M8 2h6c3 0 3 2 4 5H9c-2 0-3 8-5 9-4 0-3-3-2-6S4 2 8 2z" fill="#1a9be0" /><path d="M2 10c-1 3-2 6 2 6h5l3-9c-5-1-7 0-10 3z" fill="#8dcf5a" /><path d="M20 8c4 0 3 3 2 6s-2 8-6 8h-6c-3 0-3-2-4-5h7c3 0 3-8 7-9z" fill="#e0589b" /><path d="M16 8h5l-4 9h-5z" fill="#9a5ce8" /><path d="M6 17h9l-2 5h-3c-3 0-3-2-4-5z" fill="#f2903a" /></Ico>],
  ["Edge", <Ico w={24}><circle cx="12" cy="12" r="11.500" fill="#1478c8" /><path d="M1 11C2 4 7 .5 12 .5 19 .5 23.500 6 23.500 11c0 4-3 5.500-6 5.500-2 0-3-1-2-2.500C16 10 13 7 9 7c-4 0-7 2-8 4z" fill="#35c7c0" /><path d="M17 2.500c4 2 6.500 5 6.500 8.500 0 4-3 5.500-6 5.500-2 0-3-1-2-2.500 2-4 3-6 1.500-11.500z" fill="#5fd86a" /><path d="M9 12c-1 5 3 9 9 8.500-4 4-10 3.500-13 0s-1-8 4-8.500z" fill="#0b4f96" /></Ico>],
  ["File Explorer", <Ico w={24}><path d="M1 3h9l2 2h11v15H1z" fill="#f4b63e" /><path d="M1 7h22v12H1z" fill="#fcdb72" /><path d="M5 21v-9h14v9h-4v-5H9v5z" fill="#3b8fdd" /></Ico>],
  ["Store", <Ico w={24}><path d="M7 6V2h10v4" stroke="#2bb2ef" strokeWidth="2" /><rect x="1" y="4.500" width="22" height="19" rx="2" fill="#f4f4f4" /><path d="M8 9h4v4H8z" fill="#f1511b" /><path d="M13 9h4v4h-4z" fill="#80cc28" /><path d="M8 14h4v4H8z" fill="#00adef" /><path d="M13 14h4v4h-4z" fill="#fbbc09" /></Ico>],
  ["Outlook", <Ico w={24}><path d="M5 8l9-7 9 7v3L12 18z" fill="#0c59a4" /><path d="M7 10h17v10a3 3 0 0 1-3 3H8z" fill="#35bdf5" /><path d="M24 9L9 22h12a3 3 0 0 0 3-3z" fill="#50d9ff" /><rect y="6" width="14" height="13" rx="1" fill="#1069c9" /><circle cx="7" cy="12.500" r="3.200" stroke="#fff" strokeWidth="2" /></Ico>],
  ["Calculator", <Ico w={24}><path d="M3 0h18v24H3z" fill="#737d86" /><path d="M5 2h14v4.500H5z" fill="#45c8f2" /><path d="M5 8.500h4v4H5zM10 8.500h4v4h-4zM15 8.500h4v4h-4zM5 13.500h4v4H5zM10 13.500h4v4h-4zM5 18.500h4v4H5zM10 18.500h4v4h-4z" fill="#dfe6ec" /><path d="M15 13.500h4v9h-4z" fill="#134a86" /></Ico>],
  ["YouTube", <Ico w={24}><rect y="3.500" width="24" height="17" rx="4" fill="#f00" /><path d="M9.500 8.500l6.500 3.500-6.500 3.500z" fill="#fff" /></Ico>],
  ["Chrome", <Ico w={26}><circle cx="13" cy="13" r="12" fill="#34a853" /><path d="M2.600 7A12 12 0 0 1 23.400 7H13l-5 9z" fill="#ea4335" /><path d="M23.400 7A12 12 0 0 1 13 25l5-9-5-9z" fill="#fbbc05" /><circle cx="13" cy="13" r="5.500" fill="#4285f4" stroke="#fff" strokeWidth="2" /><circle cx="19" cy="19" r="6.500" fill="#7a57c0" /><path d="M16.500 22v-5.500l2.500 3.500 2.500-3.500V22" stroke="#fff" strokeWidth="1.200" /></Ico>, "open"],
  ["Sunrise", <Ico w={24}><path d="M0 0h24v24H0z" fill="#2b3a67" /><path d="M8 15a4 4 0 0 1 8 0v2H8z" fill="#f9b54a" /><path d="M12 4v4M5 8l3 2.500M19 8l-3 2.500M4 14h3M17 14h3" stroke="#d9b071" /><path d="M6 17h12v2H6z" fill="#d77b32" /></Ico>],
  ["Binaural", <Ico w={24}><path d="M0 0h24v24H0z" fill="#14202c" /><circle cx="15.500" cy="8" r="3.500" stroke="#cde" /><circle cx="15.500" cy="15.500" r="3.500" stroke="#cde" /><path d="M9 5l4.500 4-1 4L14 17l-5 3-4-3 1-5-1.500-4z" fill="#a4e018" /></Ico>],
  ["Photos", <Ico w={24}><path d="M12 12V1a6 6 0 0 1 0 11z" fill="#ea4335" /><path d="M12 12h11a5.500 5.500 0 0 1-11 0z" fill="#4285f4" /><path d="M12 12v11a5.500 5.500 0 0 1 0-11z" fill="#34a853" /><path d="M12 12H1a5.500 5.500 0 0 1 11 0z" fill="#fbbc05" /></Ico>],
  ["MetaTrader", <Brand s={24} />, "active"],
];

function Taskbar() {
  return (
    <TaskBar>
      <TaskButton $first aria-label="Start"><Ico w={16}><path d="M0 2.300L6.800 1.300v6.300H0zM7.700 1.200L16 0v7.600H7.700zM0 8.500h6.800v6.200L0 13.700zM7.700 8.500H16V16l-8.300-1.200z" fill="#fff" /></Ico></TaskButton>
      <TaskButton $first aria-label="Search"><Ico w={22}><circle cx="13" cy="8.500" r="7.500" stroke="#fff" strokeWidth="2" /><path d="M7.500 14L1 21" stroke="#fff" strokeWidth="2.500" /></Ico></TaskButton>
      <TaskButton $first aria-label="Task View"><Ico w={16}><path d="M.5 0v3.500h10V0M.5 16v-3.500h10V16M1 5.500h9v5H1zM14.500 0v3M14.500 8v8" stroke="#fff" /><path d="M13 4h3v3h-3z" fill="#fff" /></Ico></TaskButton>
      <TaskApps>{taskIcons.map(([n, icon, state]) => <TaskButton key={n} $state={state} aria-label={n}>{icon}</TaskButton>)}</TaskApps>
      <Weather>
        <Ico w={24} h={16}><path d="M5 16a5 5 0 0 1 0-9.500A7 7 0 0 1 18 5a5.500 5.500 0 0 1 1 11z" fill="#a9cbf8" /><path d="M5 16a5 5 0 0 1 4-7 7 7 0 0 1 8 2l7 0a5.500 5.500 0 0 1-5 5z" fill="#7fb0f5" /></Ico>
        {"2°C  Cloudy"}
      </Weather>
      <Tray>
        <Ico w={13} h={8}><path d="M1 7l5.500-5.500L12 7" stroke="#fff" strokeWidth="1.200" /></Ico>
        <Ico w={17} h={12}><path d="M4 11a4 4 0 0 1 0-7 5.500 5.500 0 0 1 9 0 3.800 3.800 0 0 1 0 7z" fill="#d8dde0" /></Ico>
        <Ico w={16} h={14}><path d="M4.500 2.500h11v7h-11zM10 9.500v3M7 12.500h6M.5.5h3v3h-3zM2 3.500v9h3" stroke="#fff" /></Ico>
        <Ico w={16} h={14}><path d="M1 5h2.500L7 1.500v11L3.500 9H1z" stroke="#fff" /><path d="M9 5q1.500 2 0 4M11 3q3 4 0 8" stroke="#fff" /><path d="M13.500 2q3 5 0 10" stroke="#7c8894" /></Ico>
        <span>РУС</span>
      </Tray>
      <Clock><span>10:24</span><span>08.12.2025</span></Clock>
      <Notify><Ico w={16} h={17}><path d="M.5.5h15v12.500h-5L8 16l-2.500-3h-5z" stroke="#fff" /></Ico></Notify>
    </TaskBar>
  );
}

export default function App() {
  return (
    <Page>
      <GlobalStyle />
      <TitleBar>
        <Brand />
        <AppTitle>170206356: MetaQuotes-Demo - Demo Account - MetaQuotes Software Corp. - [AUDUSD,H1]</AppTitle>
        <WindowButton aria-label="Minimize"><Ico w={10}><path d="M0 5.500h10" stroke="#999" /></Ico></WindowButton>
        <WindowButton aria-label="Restore"><Ico w={10}><path d="M.5 2.500h7v7h-7zM2.500 2.500v-2h7v7h-2" stroke="#999" /></Ico></WindowButton>
        <WindowButton aria-label="Close"><Ico w={10}><path d="M0 0l10 10M10 0L0 10" stroke="#999" /></Ico></WindowButton>
      </TitleBar>
      <MenuBar>
        <Ico w={15}><path d="M.5.5h10v8H.5zM4.500 5.500h10v9h-10z" fill="#eef5ff" stroke="#5a96df" /><path d="M6 12l2-4 2 4 2-4 1 3" stroke="#5a96df" /></Ico>
        <MenuItems>{["File", "View", "Insert", "Charts", "Tools", "Window", "Help"].map((m) => <button key={m}>{m}</button>)}</MenuItems>
        <MdiButtons>
          <MdiButton aria-label="Minimize chart"><Ico w={8}><path d="M1 6.500h6" stroke="#8fa5b8" strokeWidth="2" /></Ico></MdiButton>
          <MdiButton aria-label="Restore chart"><Ico w={8}><path d="M.5 3.500h5v4h-5zM2 3V1h5.500v4H6" stroke="#8fa5b8" /></Ico></MdiButton>
          <MdiButton aria-label="Close chart"><Ico w={8}><path d="M1 1l6 6M7 1L1 7" stroke="#8fa5b8" strokeWidth="2" /></Ico></MdiButton>
        </MdiButtons>
      </MenuBar>
      <TopToolbar />
      <DrawToolbar />
      <Chart />
      <TabStrip $top={23}>
        {symbols.map((s) => <Tab key={s} $active={s === "AUDUSD,H1"}>{s}</Tab>)}
        <TabScroll>
          <Ico w={5} h={8}><path d="M5 0v8L0 4z" fill="#999" /></Ico>
          <Ico w={5} h={8}><path d="M0 0v8l5-4z" fill="#999" /></Ico>
        </TabScroll>
      </TabStrip>
      <TerminalPanel />
      <StatusBar>
        <StatusMain>For Help, press F1</StatusMain>
        <StatusCell $w={117}>Default</StatusCell>
        <StatusCell $w={101} />
        <StatusCell $w={71} />
        <StatusCell $w={71} />
        <StatusCell $w={69} />
        <StatusCell $w={70} />
        <StatusCell $w={66} />
        <StatusCell $w={148}>
          <Ico w={24} h={14}>{[0, 1, 2, 3, 4, 5, 6, 7].map((i) => <React.Fragment key={i}><path d={`M${i * 3} 0h2v${10 - i}h-2z`} fill="#5f8a1e" /><path d={`M${i * 3} ${11 - i}h2v${3 + i}h-2z`} fill="#a02c10" /></React.Fragment>)}</Ico>
          1012/43 kb
        </StatusCell>
      </StatusBar>
      <Taskbar />
      <OrderDialog />
    </Page>
  );
}
